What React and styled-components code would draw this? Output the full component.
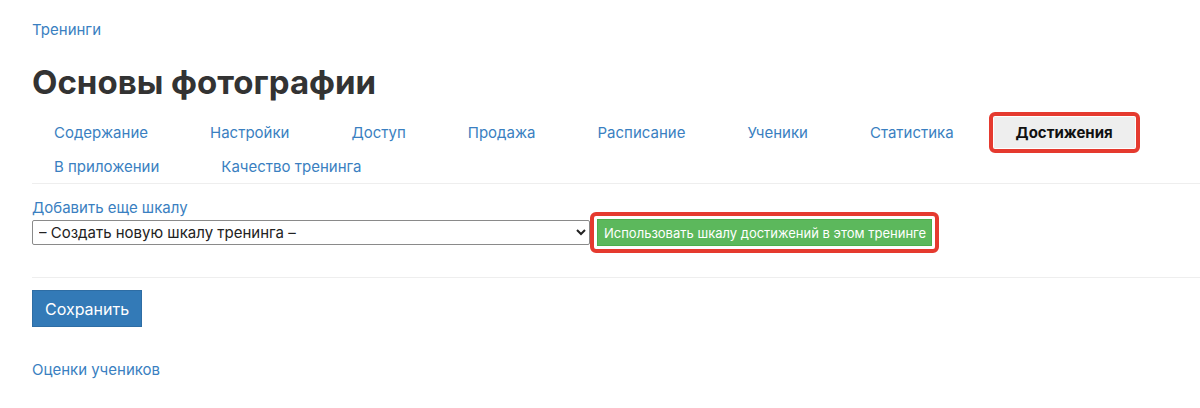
import React from 'react';
import styled, { createGlobalStyle } from 'styled-components';

const GlobalStyle = createGlobalStyle`
  html, body {
    margin: 0;
    padding: 0;
    background: #fff;
  }
  body {
    font-family: Inter, "Noto Sans", "Liberation Sans", sans-serif;
    color: #333;
  }
`;

const tabs = [
  'Содержание',
  'Настройки',
  'Доступ',
  'Продажа',
  'Расписание',
  'Ученики',
  'Статистика',
  'Достижения',
  'В приложении',
  'Качество тренинга',
];

function App() {
  return (
    <Page>
      <GlobalStyle />
      <Breadcrumb href="#">Тренинги</Breadcrumb>
      <Title>Основы фотографии</Title>

      <Tabs>
        {tabs.map((t) => (
          <Tab key={t} active={t === 'Достижения'}>
            {t}
          </Tab>
        ))}
      </Tabs>

      <Form>
        <FieldLabel href="#">Добавить еще шкалу</FieldLabel>
        <FieldRow>
          <Select defaultValue="new">
            <option value="new">– Создать новую шкалу тренинга –</option>
          </Select>
          <Marked>
            <GreenButton>Использовать шкалу достижений в этом тренинге</GreenButton>
          </Marked>
        </FieldRow>
      </Form>

      <Actions>
        <SaveButton>Сохранить</SaveButton>
      </Actions>

      <FooterLink href="#">Оценки учеников</FooterLink>
    </Page>
  );
}

const Page = styled.div`
  display: flex;
  flex-direction: column;
  align-items: flex-start;
  padding: 20px 0 0 32px;
  height: 408px;
  box-sizing: border-box;
  overflow: hidden;
`;

const Link = styled.a`
  color: #3a7fc1;
  text-decoration: none;
  font-size: 15px;
  line-height: 20px;
`;

const Breadcrumb = styled(Link)``;

const Title = styled.h1`
  margin: 23px 0 0;
  font-size: 33px;
  line-height: 38px;
  font-weight: 700;
  color: #333;
`;

const Tabs = styled.ul`
  display: flex;
  flex-wrap: wrap;
  align-self: stretch;
  column-gap: 18px;
  row-gap: 3px;
  list-style: none;
  margin: 16px 0 0;
  padding: 0 0 1px;
  border-bottom: 1px solid #eee;
`;

const Tab = styled.li`
  position: relative;
  display: flex;
  align-items: center;
  height: 31px;
  padding: 0 22px;
  font-size: 15px;
  color: ${(p) => (p.active ? '#111' : '#3a7fc1')};
  font-weight: ${(p) => (p.active ? 700 : 400)};
  background: ${(p) => (p.active ? '#eee' : 'transparent')};
  ${(p) =>
    p.active &&
    `
    &::after {
      content: '';
      position: absolute;
      inset: -5px;
      border: 4px solid #e53a2f;
      border-radius: 6px;
    }
  `}
`;

const Form = styled.div`
  display: flex;
  flex-direction: column;
  align-self: stretch;
  padding: 14px 0 31px;
  border-bottom: 1px solid #eee;
`;

const FieldLabel = styled(Link)`
  line-height: 20px;
`;

const FieldRow = styled.div`
  display: flex;
  align-items: center;
  margin-top: -1px;
`;

const Select = styled.select`
  width: 558px;
  height: 25px;
  margin-top: 1px;
  padding: 0 2px;
  border: 1px solid #8a8a8a;
  border-radius: 2px;
  background: #fff;
  font-family: Inter, "Noto Sans", sans-serif;
  font-size: 15px;
  color: #222;
`;

const Marked = styled.div`
  position: relative;
  margin-left: 7px;
  margin-top: 2px;
  &::after {
    content: '';
    position: absolute;
    inset: -7px;
    border: 4px solid #e53a2f;
    border-radius: 6px;
  }
`;

const GreenButton = styled.button`
  display: block;
  height: 27px;
  padding: 0 5px 0 6px;
  border: 1px solid #4cae4c;
  background: #5cb85c;
  color: #fff;
  font-family: Inter, "Noto Sans", sans-serif;
  font-size: 13px;
  cursor: pointer;
`;

const Actions = styled.div`
  padding-top: 12px;
`;

const SaveButton = styled.button`
  height: 37px;
  padding: 0 12px;
  border: 1px solid #2e6da4;
  background: #337ab7;
  color: #fff;
  font-family: Inter, "Noto Sans", sans-serif;
  font-size: 16px;
  cursor: pointer;
`;

const FooterLink = styled(Link)`
  margin-top: 33px;
`;

export default App;
